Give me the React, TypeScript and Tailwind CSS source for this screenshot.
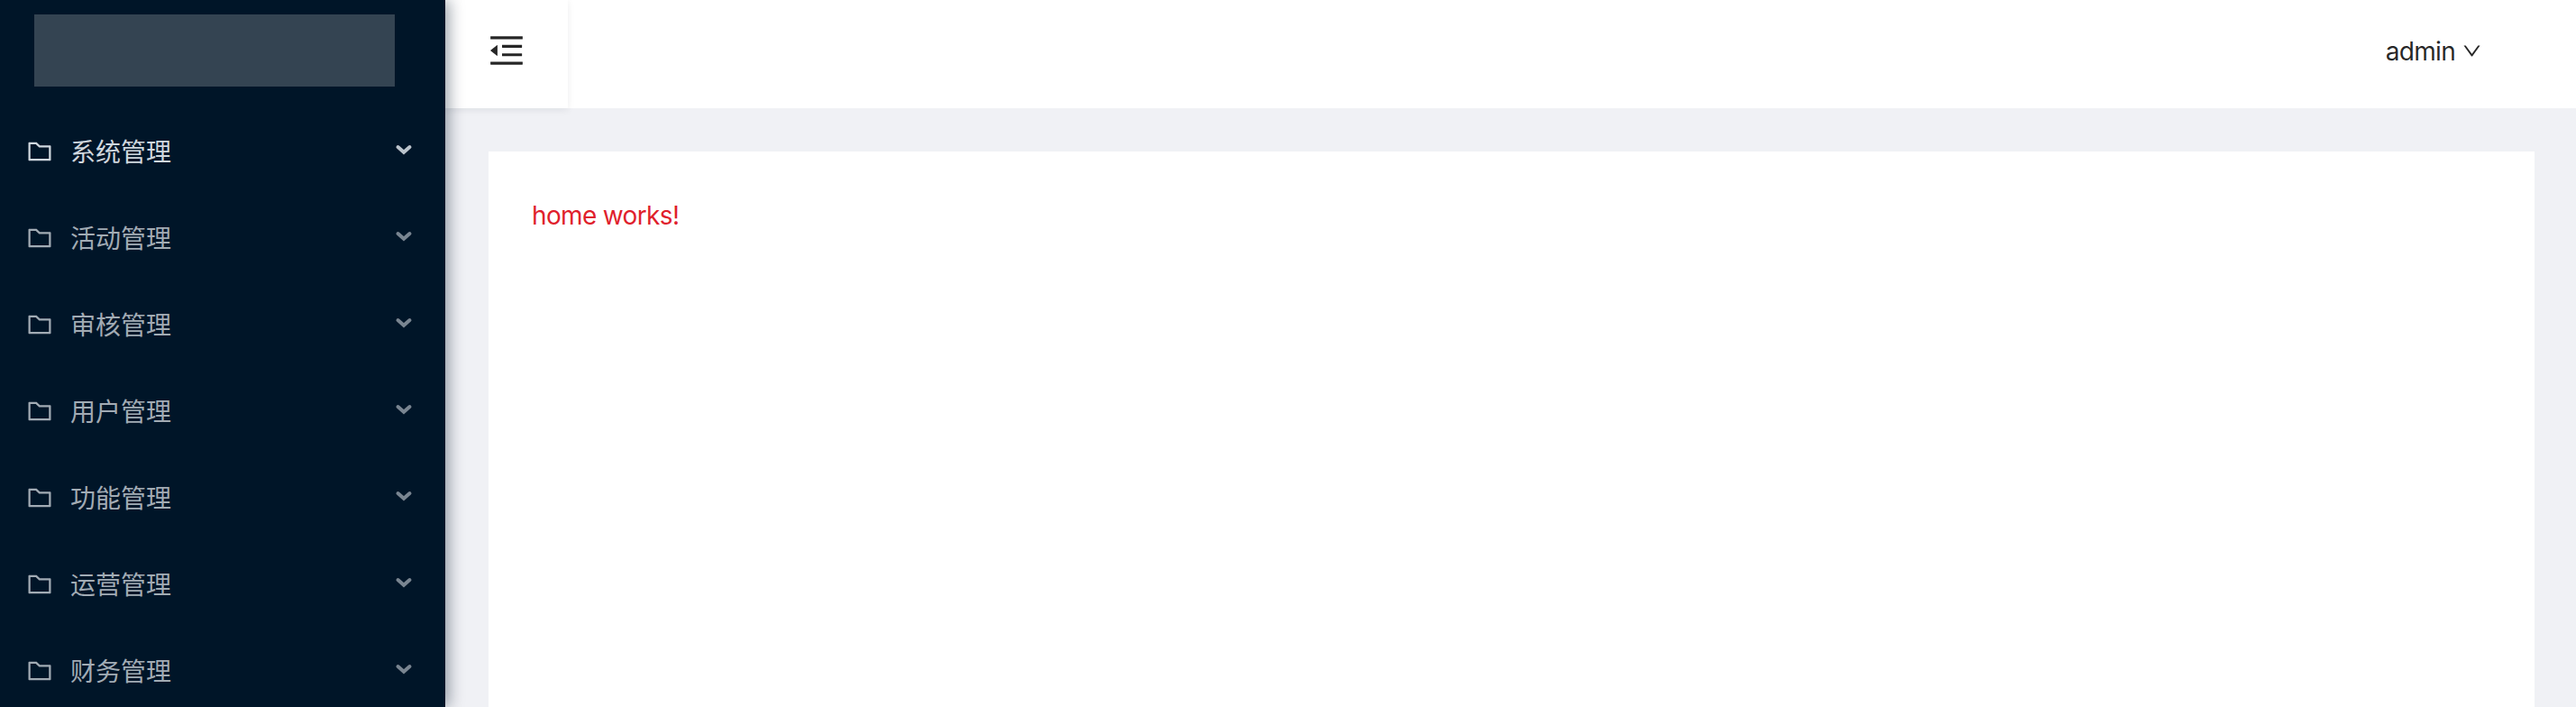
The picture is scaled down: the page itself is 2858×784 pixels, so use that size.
import React from 'react';

const menus = ['系统管理', '活动管理', '审核管理', '用户管理', '功能管理', '运营管理', '财务管理'];

function AntIcon({ d, className }: { d: string; className: string }) {
  return (
    <svg viewBox="64 64 896 896" fill="currentColor" className={className} aria-hidden="true">
      <path d={d} />
    </svg>
  );
}

const FOLDER =
  'M880 298.4H521L403.7 186.2a8.15 8.15 0 0 0-5.5-2.2H144c-17.7 0-32 14.3-32 32v592c0 17.7 14.3 32 32 32h736c17.7 0 32-14.3 32-32V330.4c0-17.7-14.3-32-32-32zM840 768H184V256h188.5l119.6 114.4H840V768z';
const MENU_FOLD =
  'M408 442h480c4.4 0 8-3.6 8-8v-56c0-4.4-3.6-8-8-8H408c-4.4 0-8 3.6-8 8v56c0 4.4 3.6 8 8 8zm-8 204c0 4.4 3.6 8 8 8h480c4.4 0 8-3.6 8-8v-56c0-4.4-3.6-8-8-8H408c-4.4 0-8 3.6-8 8v56zm504-486H120c-4.4 0-8 3.6-8 8v56c0 4.4 3.6 8 8 8h784c4.4 0 8-3.6 8-8v-56c0-4.4-3.6-8-8-8zm0 632H120c-4.4 0-8 3.6-8 8v56c0 4.4 3.6 8 8 8h784c4.4 0 8-3.6 8-8v-56c0-4.4-3.6-8-8-8zM115.4 518.9L271.7 642c5.8 4.6 14.4.5 14.4-6.9V388.9c0-7.4-8.5-11.5-14.4-6.9L115.4 505.1a8.74 8.74 0 0 0 0 13.8z';
const DOWN =
  'M884 256h-75c-5.1 0-9.9 2.5-12.9 6.6L512 654.2 227.9 262.6c-3-4.1-7.8-6.6-12.9-6.6h-75c-6.5 0-10.3 7.4-6.5 12.7l352.6 486.1c12.8 17.6 39 17.6 51.7 0l352.6-486.1c3.9-5.3.1-12.7-6.4-12.7z';

function MenuItem({ label, active }: { label: string; active: boolean }) {
  return (
    <li className={`flex h-24 items-center pl-[30px] pr-9 ${active ? 'text-[#d0d7de]' : 'text-[#a2abb4]'}`}>
      <AntIcon d={FOLDER} className="size-7 shrink-0" />
      <span className="ml-5 flex-1 pt-[2px] text-[28px] leading-10">{label}</span>
      <svg viewBox="0 0 20 12" className={`mb-1 h-3 w-5 ${active ? 'opacity-90' : 'opacity-75'}`} fill="none" stroke="currentColor" strokeWidth="4" strokeLinecap="round">
        <path d="M3.5 3 10 8.8l6.5-5.8" />
      </svg>
    </li>
  );
}

export default function App() {
  return (
    <div className="flex h-[784px] w-full overflow-hidden bg-[#f0f1f5] font-[Inter,'Noto_Sans_CJK_SC',sans-serif]">
      <aside className="z-10 w-[494px] shrink-0 bg-[#001528] shadow-[4px_0_16px_rgba(0,21,41,0.4)]">
        <div className="mx-[38px] mt-4 h-20 w-[400px] bg-[#344452]" />
        <ul className="mt-6">
          {menus.map((label, i) => (
            <MenuItem key={label} label={label} active={i === 0} />
          ))}
        </ul>
      </aside>
      <div className="flex min-w-0 flex-1 flex-col">
        <header className="flex h-[120px] shrink-0 items-center justify-between bg-white text-black/85">
          <button className="flex h-[120px] w-[136px] items-center justify-center shadow-[0_2px_8px_rgba(0,21,41,0.08)]">
            <AntIcon d={MENU_FOLD} className="mb-2 size-10" />
          </button>
          <div className="mb-[7px] mr-[105px] flex items-center gap-2">
            <span className="text-[28px] leading-10 tracking-[-0.7px]">admin</span>
            <AntIcon d={DOWN} className="size-[21px]" />
          </div>
        </header>
        <main className="ml-12 mr-[46px] mt-12 flex-1 bg-white px-12 pt-[49px]">
          <p className="text-[28px] leading-[44px] tracking-[-0.65px] text-[#e01f2d]">home works!</p>
        </main>
      </div>
    </div>
  );
}
